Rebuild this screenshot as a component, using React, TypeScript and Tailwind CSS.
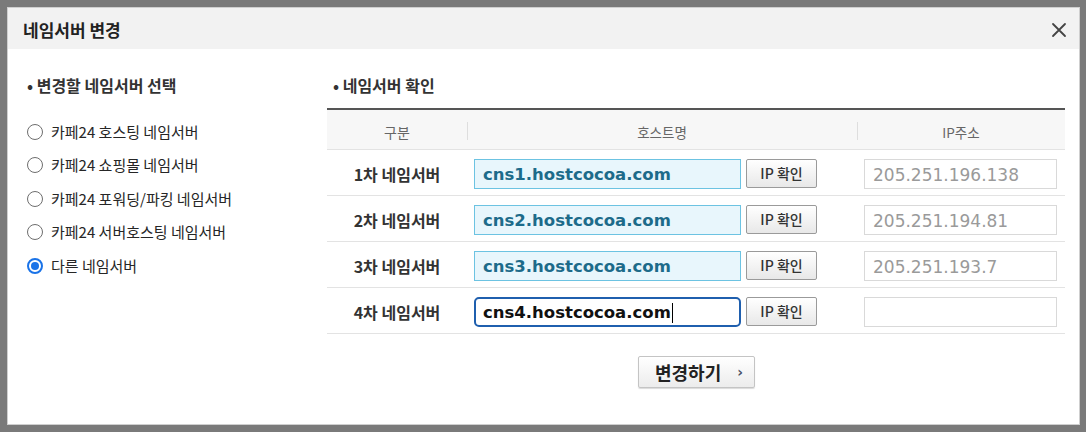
import React from "react";

const KR = { fontFamily: "'Noto Sans CJK KR', 'Noto Sans', sans-serif" };
const DV = { fontFamily: "'DejaVu Sans', 'Noto Sans CJK KR', sans-serif" };

function Radio({ label, checked }: { label: string; checked?: boolean }) {
  return (
    <div className="flex h-[33.5px] items-center">
      {checked ? (
        <span className="flex h-[16px] w-[16px] items-center justify-center rounded-full border-2 border-[#1a73e8] bg-white">
          <span className="h-[8px] w-[8px] rounded-full bg-[#1a73e8]" />
        </span>
      ) : (
        <span className="h-[16px] w-[16px] rounded-full border border-[#6e6e6e] bg-white" />
      )}
      <span className="ml-[8px] text-[15px] leading-[20px] text-[#262626]" style={KR}>
        {label}
      </span>
    </div>
  );
}

function Row({
  label,
  host,
  ip,
  focused,
}: {
  label: string;
  host: string;
  ip: string;
  focused?: boolean;
}) {
  return (
    <div className="flex h-[46px] items-center border-b border-[#e3e3e3] pt-[3px]">
      <div className="flex w-[140px] justify-center">
        <span className="text-[16px] font-bold leading-[20px] text-[#333]" style={KR}>
          {label}
        </span>
      </div>
      <div className="flex w-[390px] items-center pl-[7px]">
        {focused ? (
          <div className="flex h-[30px] w-[267px] items-center rounded-[5px] border-2 border-[#1f5fae] bg-white pl-[7px] pt-[2px]">
            <span className="text-[16.5px] font-bold leading-[20px] text-[#111]" style={DV}>
              {host}
            </span>
            <span className="ml-[1px] h-[20px] w-[1.5px] bg-black" />
          </div>
        ) : (
          <div className="flex h-[30px] w-[267px] items-center border border-[#6cc3e2] bg-[#e8f6fc] pl-[8px] pt-[2px]">
            <span className="text-[16.5px] font-bold leading-[20px] text-[#1d6b8a]" style={DV}>
              {host}
            </span>
          </div>
        )}
        <button className="mb-[2px] ml-[5px] flex h-[29px] w-[71px] items-center justify-center rounded-[2px] border border-[#9a9a9a] bg-gradient-to-b from-white to-[#e8e8e8]">
          <span className="text-[14px] font-medium leading-[16px] text-[#333]" style={KR}>
            IP 확인
          </span>
        </button>
      </div>
      <div className="flex flex-1 items-center pl-[7px]">
        <div className="flex h-[30px] w-[193px] items-center border border-[#d9d9d9] bg-white pl-[8px] pt-[2px]">
          <span className="text-[17px] leading-[20px] text-[#9a9a9a]" style={DV}>
            {ip}
          </span>
        </div>
      </div>
    </div>
  );
}

export default function App() {
  return (
    <div className="h-[432px] w-[1086px] bg-[#7a7a7a] pb-[7px] pl-[7px] pr-[6px] pt-[7px]">
      <div className="flex h-full w-full flex-col border border-[#cfcfcf] bg-white">
        <div className="flex h-[41px] items-center justify-between bg-[#f2f2f2] pl-[15px] pr-[12px]">
          <span className="mt-[2px] text-[17px] font-bold leading-[20px] text-[#222]" style={KR}>
            네임서버 변경
          </span>
          <svg width="16" height="16" viewBox="0 0 16 16" className="mt-[2px]">
            <path d="M2 2 L14 14 M14 2 L2 14" stroke="#444" strokeWidth="1.8" strokeLinecap="round" />
          </svg>
        </div>
        <div className="flex flex-1 pt-[26px]">
          <div className="w-[319px] pl-[19px]">
            <div className="text-[16px] font-bold leading-[20px] text-[#333]" style={KR}>
              • 변경할 네임서버 선택
            </div>
            <div className="mt-[20px] flex flex-col">
              <Radio label="카페24 호스팅 네임서버" />
              <Radio label="카페24 쇼핑몰 네임서버" />
              <Radio label="카페24 포워딩/파킹 네임서버" />
              <Radio label="카페24 서버호스팅 네임서버" />
              <Radio label="다른 네임서버" checked />
            </div>
          </div>
          <div className="flex w-[738px] flex-col">
            <div className="pl-[6px] text-[16px] font-bold leading-[20px] text-[#333]" style={KR}>
              • 네임서버 확인
            </div>
            <div className="mt-[13px] border-t-2 border-[#555]">
              <div className="relative flex h-[40px] items-center border-b border-[#e3e3e3] bg-[#f7f7f7] pt-[4px]">
                <span className="absolute left-[140px] top-[12px] h-[18px] w-px bg-[#dedede]" />
                <span className="absolute left-[530px] top-[12px] h-[18px] w-px bg-[#dedede]" />
                <div className="flex w-[140px] justify-center">
                  <span className="text-[14px] leading-[16px] text-[#666]" style={KR}>
                    구분
                  </span>
                </div>
                <div className="flex w-[390px] justify-center">
                  <span className="text-[13.5px] leading-[16px] text-[#666]" style={KR}>
                    호스트명
                  </span>
                </div>
                <div className="flex flex-1 justify-center">
                  <span className="text-[13.5px] leading-[16px] text-[#666]" style={KR}>
                    IP주소
                  </span>
                </div>
              </div>
              <Row label="1차 네임서버" host="cns1.hostcocoa.com" ip="205.251.196.138" />
              <Row label="2차 네임서버" host="cns2.hostcocoa.com" ip="205.251.194.81" />
              <Row label="3차 네임서버" host="cns3.hostcocoa.com" ip="205.251.193.7" />
              <Row label="4차 네임서버" host="cns4.hostcocoa.com" ip="" focused />
            </div>
            <div className="mt-[22px] flex justify-center">
              <button className="flex h-[32px] w-[117px] items-center justify-center rounded-[2px] border border-[#c4c4c4] bg-gradient-to-b from-white to-[#ececec] pl-[6px] shadow-[0_1px_1px_rgba(0,0,0,0.15)]">
                <span className="text-[18px] font-bold leading-[20px] text-[#222]" style={KR}>
                  변경하기
                </span>
                <span className="ml-[16px] text-[14px] font-bold leading-[16px] text-[#4a5066]" style={DV}>
                  ›
                </span>
              </button>
            </div>
          </div>
        </div>
      </div>
    </div>
  );
}
